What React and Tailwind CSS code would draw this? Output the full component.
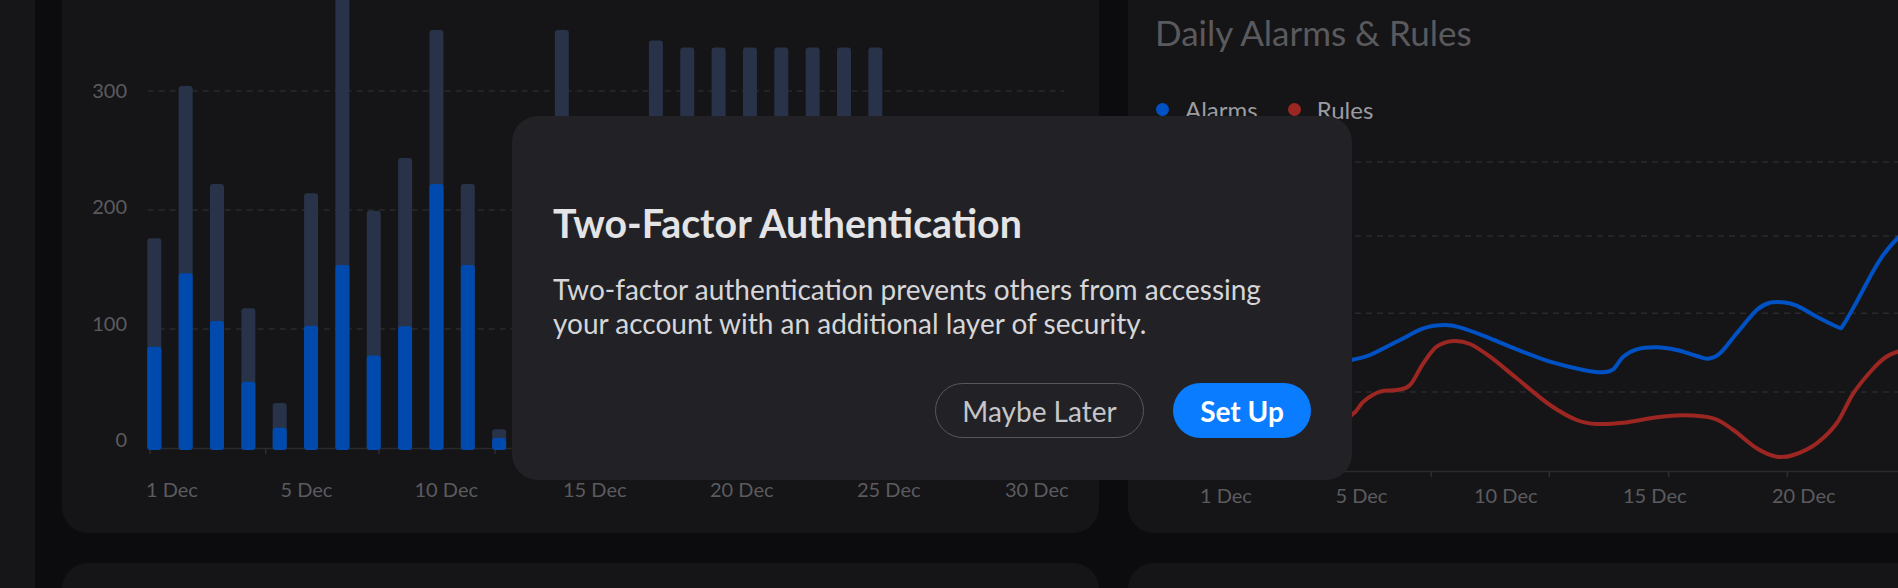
import React from "react";

const smooth = (pts) => {
  let d = `M${pts[0][0]},${pts[0][1]}`;
  for (let i = 0; i < pts.length - 1; i++) {
    const p0 = pts[i - 1] || pts[i];
    const p1 = pts[i];
    const p2 = pts[i + 1];
    const p3 = pts[i + 2] || p2;
    const c1 = [p1[0] + (p2[0] - p0[0]) / 6, p1[1] + (p2[1] - p0[1]) / 6];
    const c2 = [p2[0] - (p3[0] - p1[0]) / 6, p2[1] - (p3[1] - p1[1]) / 6];
    d += ` C${c1[0].toFixed(1)},${c1[1].toFixed(1)} ${c2[0].toFixed(1)},${c2[1].toFixed(1)} ${p2[0]},${p2[1]}`;
  }
  return d;
};

// [darkTop, blueTop] in page pixels
const bars = [
  [238.3, 346.7], [86, 273.3], [184, 321], [308.3, 381.7], [403, 427.7],
  [193.3, 325.7], [-20, 265], [210.7, 355.5], [157.9, 326.2], [30, 184],
  [184, 265], [429.3, 438], [220, 350], [30, 290], [250, 360],
  [220, 340], [40.5, 300], [47.6, 320], [47.6, 320], [47.6, 320],
  [47.6, 320], [47.6, 320], [47.6, 320], [47.6, 320], [300, 400],
  [320, 400], [280, 390], [330, 410], [300, 400], [350, 420],
];

const leftGrid = [91, 210, 329];
const leftYLabels = [
  ["300", 97.5], ["200", 214.2], ["100", 330.9], ["0", 446.7],
];
const leftXLabels = [
  ["1 Dec", 146], ["5 Dec", 280.5], ["10 Dec", 414.5], ["15 Dec", 563],
  ["20 Dec", 710], ["25 Dec", 857], ["30 Dec", 1005],
];
const leftTicks = [150, 265.7, 379, 495, 610, 725, 840, 955];

const blueLine = [
  [1200, 380], [1260, 372], [1320, 368], [1351.7, 360], [1370, 355], [1400, 340],
  [1423.3, 328.3], [1445, 325], [1463.3, 328.3], [1490, 338.3], [1516.7, 349.3],
  [1550, 361.7], [1583.3, 370], [1603.3, 372.3], [1613.3, 369.3], [1623.3, 356.7],
  [1636.7, 349.3], [1656.7, 347.3], [1676.7, 350], [1696.7, 356], [1708.3, 358.7],
  [1720, 353.3], [1736.7, 333.3], [1756.7, 310], [1770, 302.7], [1783.3, 302.3],
  [1796.7, 305.7], [1816.7, 316.7], [1838.3, 327.3], [1843.3, 325], [1856.7, 301.7],
  [1872, 273.3], [1884, 254], [1900, 236], [1920, 222],
];
const redLine = [
  [1200, 440], [1260, 436], [1320, 430], [1351.7, 415], [1363.3, 401.7], [1380, 391.7],
  [1396.7, 390], [1410, 385], [1423.3, 363.3], [1436.7, 346.7], [1453.3, 341],
  [1470, 344], [1490, 356.7], [1516.7, 378.3], [1550, 405], [1576.7, 420],
  [1596.7, 424], [1623.3, 422.7], [1656.7, 417.3], [1683.3, 415.3], [1713.3, 418.3],
  [1733.3, 430], [1756.7, 448.3], [1776.7, 456.7], [1793.3, 455], [1816.7, 443.3],
  [1836.7, 423.3], [1853.3, 393.3], [1872, 370], [1886, 357], [1900, 351], [1920, 347],
];
const rightGrid = [162, 236, 313.3, 392];
const rightTicks = [1431.3, 1549.3, 1668.7, 1787.3];
const rightXLabels = [
  ["1 Dec", 1200], ["5 Dec", 1335.5], ["10 Dec", 1474], ["15 Dec", 1623], ["20 Dec", 1772],
];

function LeftChart() {
  return (
    <svg width="1037" height="573" viewBox="62 -40 1037 573" className="block">
      {leftGrid.map((y) => (
        <line key={y} x1="147.7" x2="1064" y1={y} y2={y} stroke="#2a2a2e" strokeWidth="1.5" strokeDasharray="6 5" />
      ))}
      <line x1="147.7" x2="1064" y1="448.5" y2="448.5" stroke="#2a2a2e" strokeWidth="1.5" />
      {leftTicks.map((x) => (
        <line key={x} x1={x} x2={x} y1="448" y2="454" stroke="#2e2e32" strokeWidth="1.5" />
      ))}
      {bars.map(([top, blue], i) => {
        const x = 147.3 + 31.35 * i;
        return (
          <g key={i}>
            <rect x={x} y={top} width="14" height={450 - top} rx="3" fill="#283248" />
            <rect x={x} y={blue} width="14" height={450 - blue} rx="3" fill="#004aad" />
          </g>
        );
      })}
      {leftYLabels.map(([t, y]) => (
        <text key={t} x="127" y={y} textAnchor="end" fontSize="20" fill="#5b5b5f">{t}</text>
      ))}
      {leftXLabels.map(([t, x]) => (
        <text key={t} x={x} y="496.7" fontSize="20" fill="#5b5b5f">{t}</text>
      ))}
    </svg>
  );
}

function RightChart() {
  return (
    <svg width="1037" height="409" viewBox="1128 124 1037 409" className="block">
      {rightGrid.map((y) => (
        <line key={y} x1="1190" x2="2140" y1={y} y2={y} stroke="#2a2a2e" strokeWidth="1.5" strokeDasharray="6 5" />
      ))}
      <line x1="1190" x2="2140" y1="471.5" y2="471.5" stroke="#2a2a2e" strokeWidth="1.5" />
      {rightTicks.map((x) => (
        <line key={x} x1={x} x2={x} y1="471" y2="477" stroke="#2e2e32" strokeWidth="1.5" />
      ))}
      <path d={smooth(redLine)} fill="none" stroke="#9b2622" strokeWidth="4" strokeLinecap="round" />
      <path d={smooth(blueLine)} fill="none" stroke="#0052c4" strokeWidth="4" strokeLinecap="round" />
      {rightXLabels.map(([t, x]) => (
        <text key={t} x={x} y="503.3" fontSize="20" fill="#5b5b5f">{t}</text>
      ))}
    </svg>
  );
}

export default function App() {
  return (
    <div className="relative flex w-[1898px] h-[588px] overflow-hidden bg-[#0c0c0e] font-['Lato',sans-serif]">
      <div className="w-[35px] shrink-0 bg-[#161618]" />
      <div className="flex flex-col gap-[30px] pl-[27px] -mt-[40px]">
        <div className="flex gap-[29px]">
          <div className="w-[1037px] h-[573px] shrink-0 rounded-[26px] bg-[#151517] overflow-hidden">
            <LeftChart />
          </div>
          <div className="w-[1037px] h-[573px] shrink-0 rounded-[26px] bg-[#151517] overflow-hidden flex flex-col">
            <div className="pt-[52px] pl-[27px]">
              <div className="h-[41px] leading-[41px] text-[35px] text-[#5a5a5e]">Daily Alarms &amp; Rules</div>
              <div className="mt-[42px] h-[29px] flex items-center text-[24px] leading-[29px] text-[#9b9ba0]">
                <span className="w-[13px] h-[13px] rounded-full bg-[#0052c4] ml-px" />
                <span className="ml-[16px]">Alarms</span>
                <span className="w-[13px] h-[13px] rounded-full bg-[#9b2622] ml-[30px]" />
                <span className="ml-[16px]">Rules</span>
              </div>
            </div>
            <RightChart />
          </div>
        </div>
        <div className="flex gap-[29px]">
          <div className="w-[1037px] h-[300px] shrink-0 rounded-[26px] bg-[#151517]" />
          <div className="w-[1037px] h-[300px] shrink-0 rounded-[26px] bg-[#151517]" />
        </div>
      </div>

      <div className="absolute left-[512px] top-[116px] w-[840px] h-[364px] rounded-[26px] bg-[#222226] pl-[41px] pr-[41px] pt-[83px] flex flex-col">
        <div className="text-[39.3px] leading-[48px] font-bold text-[#e4e4e6]">Two-Factor Authentication</div>
        <p className="mt-[25px] text-[28px] leading-[34px] text-[#d6d6d9]">
          Two-factor authentication prevents others from accessing
          <br />
          your account with an additional layer of security.
        </p>
        <div className="mt-auto mb-[42px] flex justify-end gap-[29px]">
          <button className="w-[209px] h-[55px] rounded-full border-[1.5px] border-[#58585c] text-[28px] text-[#c6c6ca] flex items-center justify-center">
            Maybe Later
          </button>
          <button className="w-[138px] h-[55px] rounded-full bg-[#0a7cff] text-[28px] font-bold text-white flex items-center justify-center">
            Set Up
          </button>
        </div>
      </div>
    </div>
  );
}
